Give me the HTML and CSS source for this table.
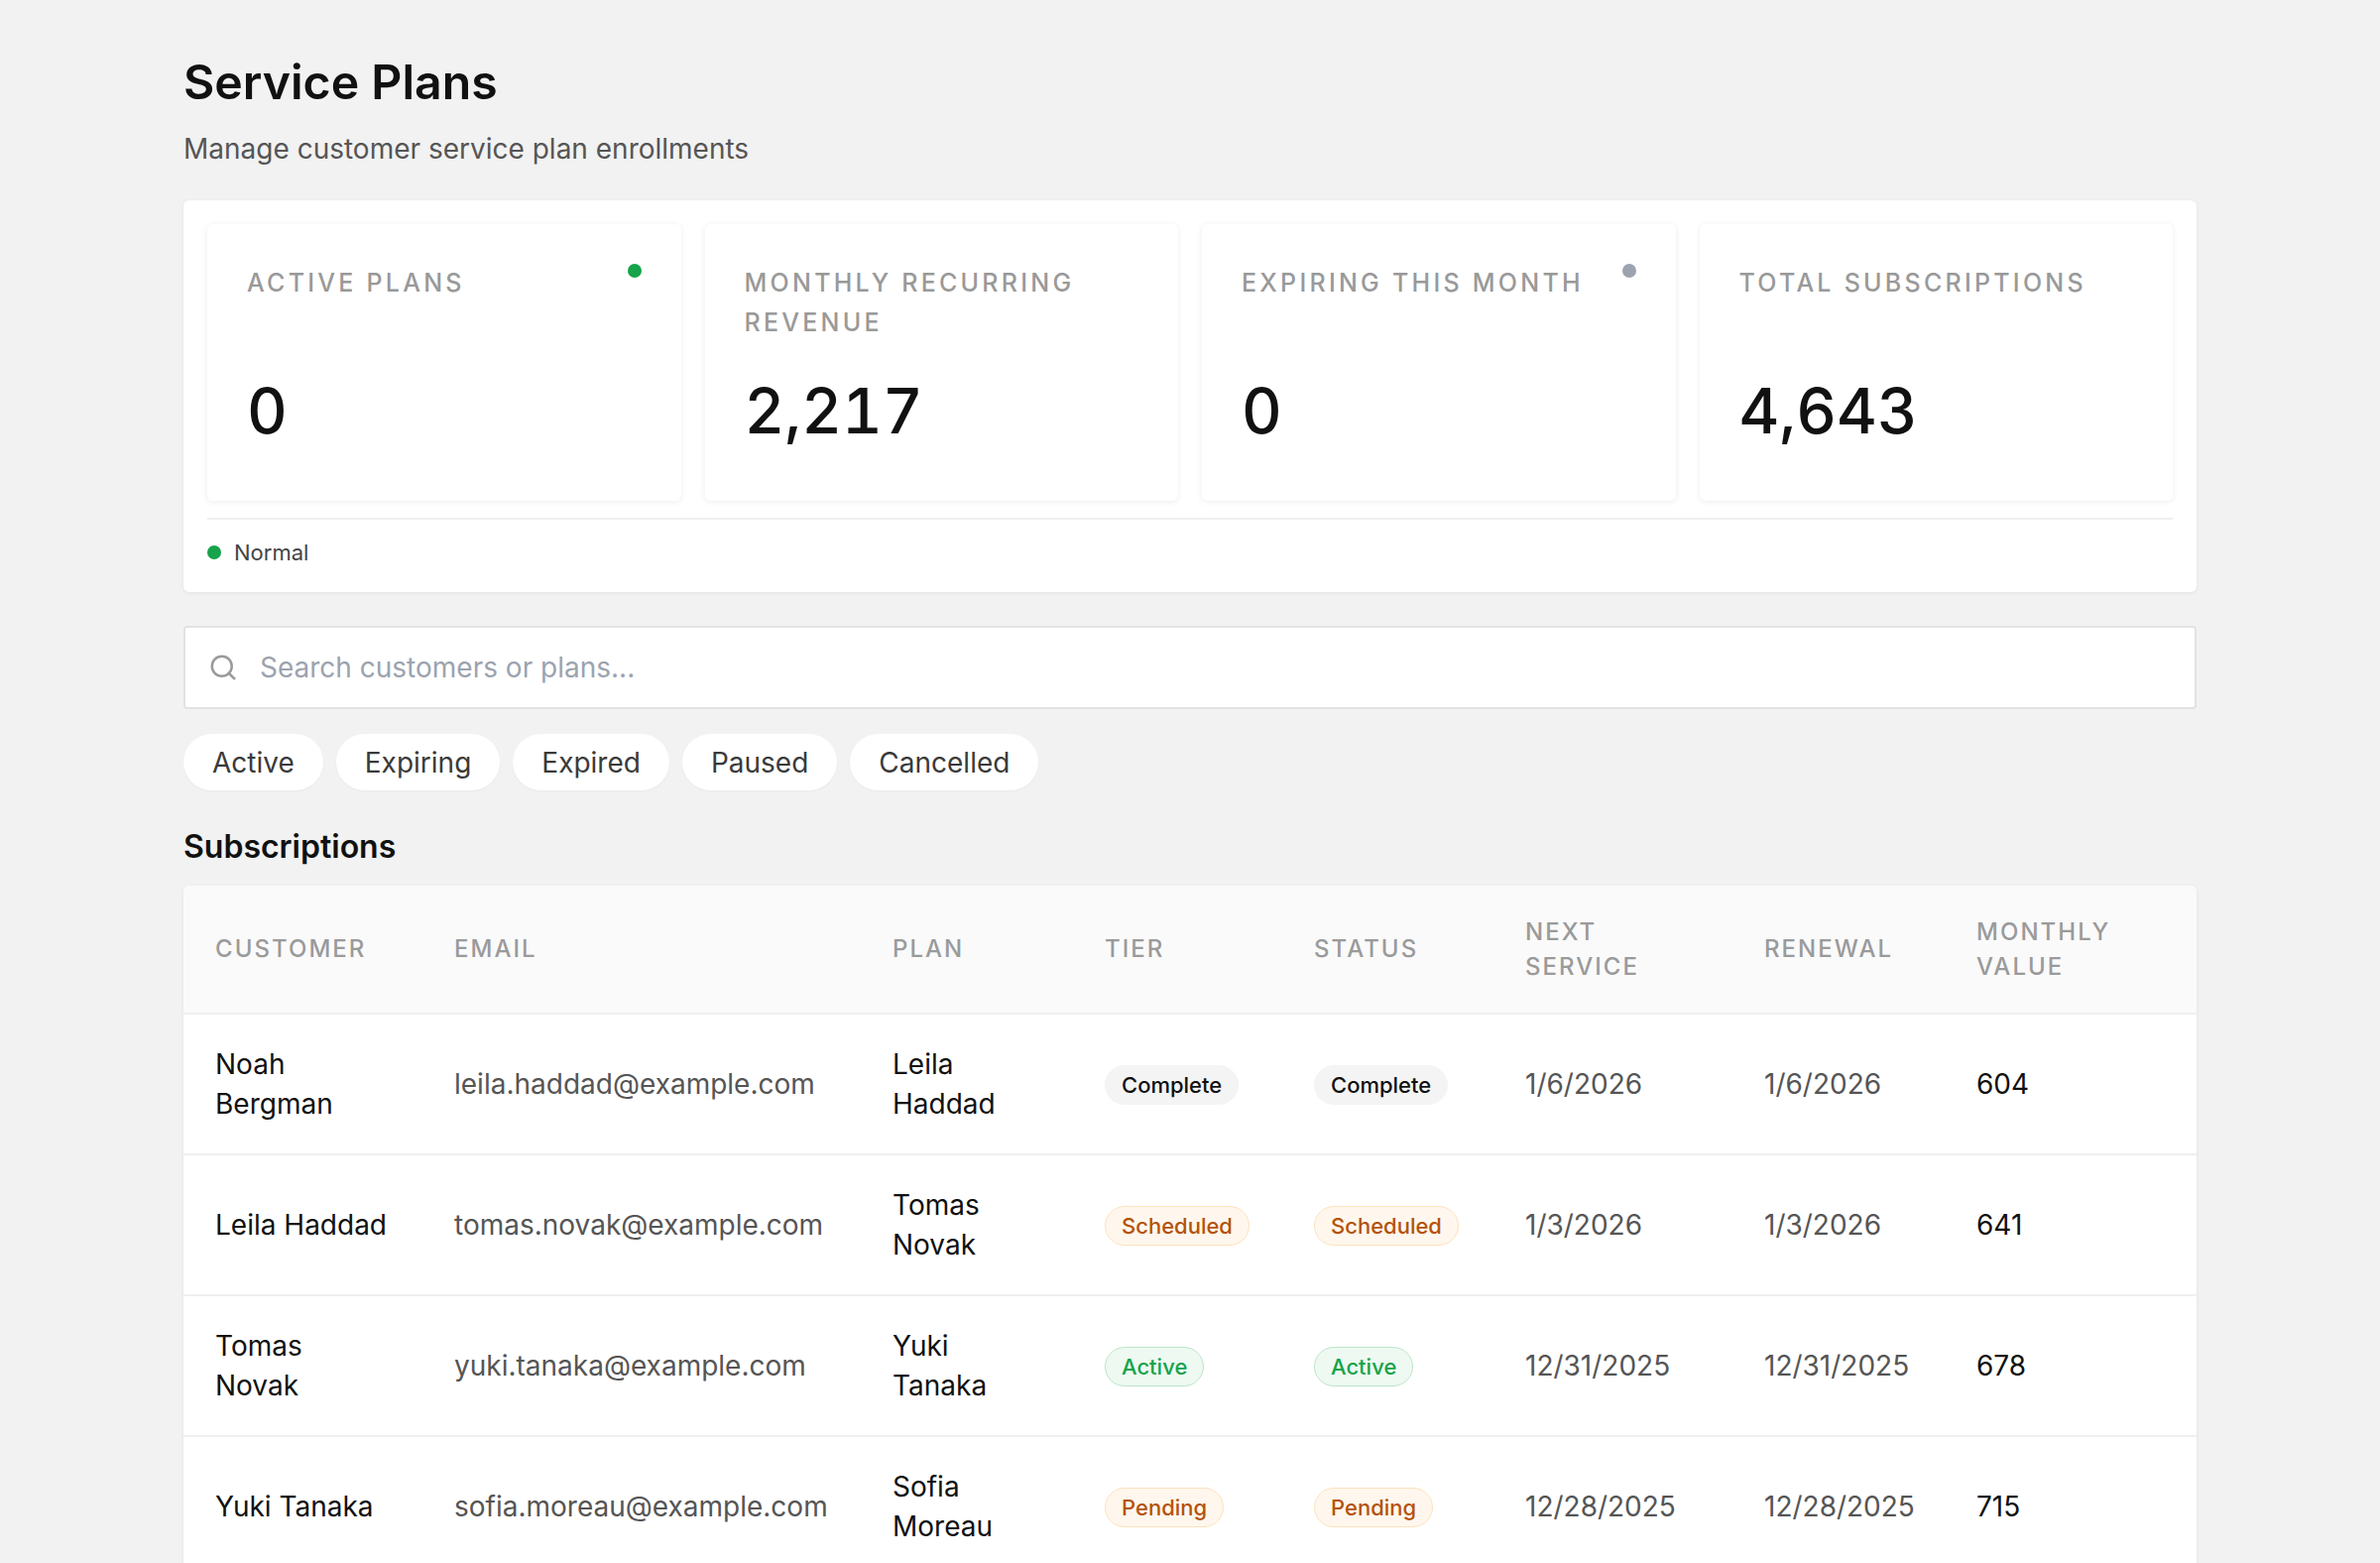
FILE: index.html
```html
<!DOCTYPE html>
<html lang="en">
<head>
<meta charset="utf-8">
<title>Service Plans</title>
<link rel="stylesheet" href="styles.css">
</head>
<body>
<main class="page">
  <h1 class="title">Service Plans</h1>
  <p class="subtitle">Manage customer service plan enrollments</p>

  <section class="stats-panel">
    <div class="stats-row">
      <div class="stat-card">
        <div class="stat-label">Active Plans</div>
        <div class="stat-value">0</div>
        <span class="stat-dot dot-green"></span>
      </div>
      <div class="stat-card">
        <div class="stat-label">Monthly Recurring Revenue</div>
        <div class="stat-value">2,217</div>
      </div>
      <div class="stat-card">
        <div class="stat-label">Expiring This Month</div>
        <div class="stat-value">0</div>
        <span class="stat-dot dot-gray"></span>
      </div>
      <div class="stat-card">
        <div class="stat-label">Total Subscriptions</div>
        <div class="stat-value">4,643</div>
      </div>
    </div>
    <div class="stats-footer">
      <span class="legend-dot"></span>
      <span class="legend-text">Normal</span>
    </div>
  </section>

  <div class="search">
    <svg class="search-icon" viewBox="0 0 24 24" fill="none" stroke="currentColor" stroke-width="2" stroke-linecap="round" stroke-linejoin="round"><circle cx="11" cy="11" r="8"></circle><line x1="21" y1="21" x2="16.65" y2="16.65"></line></svg>
    <input class="search-input" type="text" placeholder="Search customers or plans...">
  </div>

  <div class="filters">
    <button class="chip">Active</button>
    <button class="chip">Expiring</button>
    <button class="chip">Expired</button>
    <button class="chip">Paused</button>
    <button class="chip">Cancelled</button>
  </div>

  <h2 class="section-title">Subscriptions</h2>

  <div class="table-wrap">
    <table class="subs">
      <colgroup>
        <col class="c-customer">
        <col class="c-email">
        <col class="c-plan">
        <col class="c-tier">
        <col class="c-status">
        <col class="c-next">
        <col class="c-renewal">
        <col class="c-value">
      </colgroup>
      <thead>
        <tr>
          <th>Customer</th>
          <th>Email</th>
          <th>Plan</th>
          <th>Tier</th>
          <th>Status</th>
          <th>Next Service</th>
          <th>Renewal</th>
          <th>Monthly Value</th>
        </tr>
      </thead>
      <tbody>
        <tr>
          <td class="strong">Noah Bergman</td>
          <td class="muted">leila.haddad@example.com</td>
          <td class="strong">Leila Haddad</td>
          <td><span class="badge badge-complete">Complete</span></td>
          <td><span class="badge badge-complete">Complete</span></td>
          <td class="muted">1/6/2026</td>
          <td class="muted">1/6/2026</td>
          <td class="strong">604</td>
        </tr>
        <tr>
          <td class="strong">Leila Haddad</td>
          <td class="muted">tomas.novak@example.com</td>
          <td class="strong">Tomas Novak</td>
          <td><span class="badge badge-warn">Scheduled</span></td>
          <td><span class="badge badge-warn">Scheduled</span></td>
          <td class="muted">1/3/2026</td>
          <td class="muted">1/3/2026</td>
          <td class="strong">641</td>
        </tr>
        <tr>
          <td class="strong">Tomas Novak</td>
          <td class="muted">yuki.tanaka@example.com</td>
          <td class="strong">Yuki Tanaka</td>
          <td><span class="badge badge-active">Active</span></td>
          <td><span class="badge badge-active">Active</span></td>
          <td class="muted">12/31/2025</td>
          <td class="muted">12/31/2025</td>
          <td class="strong">678</td>
        </tr>
        <tr>
          <td class="strong">Yuki Tanaka</td>
          <td class="muted">sofia.moreau@example.com</td>
          <td class="strong">Sofia Moreau</td>
          <td><span class="badge badge-warn">Pending</span></td>
          <td><span class="badge badge-warn">Pending</span></td>
          <td class="muted">12/28/2025</td>
          <td class="muted">12/28/2025</td>
          <td class="strong">715</td>
        </tr>
        <tr>
          <td class="strong">Sofia Moreau</td>
          <td class="muted">noah.bergman@example.com</td>
          <td class="strong">Noah Bergman</td>
          <td><span class="badge badge-complete">Complete</span></td>
          <td><span class="badge badge-complete">Complete</span></td>
          <td class="muted">12/25/2025</td>
          <td class="muted">12/25/2025</td>
          <td class="strong">752</td>
        </tr>
      </tbody>
    </table>
  </div>
</main>
</body>
</html>
```

FILE: styles.css
```css
* { box-sizing: border-box; }

html, body { margin: 0; padding: 0; }

body {
  background: #f2f2f2;
  font-family: Inter, "Noto Sans", "Liberation Sans", sans-serif;
  color: #111;
}

.page {
  max-width: 2030px;
  margin: 0 auto;
  padding: 54px 0 80px;
}

.title {
  margin: 0;
  font-size: 48.2px;
  line-height: 58px;
  font-weight: 600;
  color: #111;
}

.subtitle {
  margin: 18px 0 32px;
  font-size: 28px;
  line-height: 40px;
  color: #555;
}

/* Stats panel */
.stats-panel {
  background: #fff;
  border-radius: 6px;
  box-shadow: 0 1px 4px rgba(0, 0, 0, 0.07);
  padding: 24px 24px 25px;
}

.stats-row {
  display: grid;
  grid-template-columns: repeat(4, 1fr);
  gap: 24px;
}

.stat-card {
  position: relative;
  height: 279px;
  padding: 39px 40px 0;
  background: #fff;
  border-radius: 6px;
  box-shadow: 0 1px 6px rgba(0, 0, 0, 0.08);
}

.stat-label {
  min-height: 80px;
  font-size: 25px;
  line-height: 40px;
  font-weight: 500;
  letter-spacing: 0.13em;
  text-transform: uppercase;
  color: #999;
}

.stat-value {
  margin-top: 31px;
  font-size: 63px;
  line-height: 77px;
  font-weight: 500;
  font-variant-numeric: tabular-nums;
  color: #111;
}

.stat-dot {
  position: absolute;
  top: 40px;
  right: 40px;
  width: 14px;
  height: 14px;
  border-radius: 50%;
}

.dot-green { background: #16a34a; }
.dot-gray { background: #9ca3af; }

.stats-footer {
  margin-top: 17px;
  border-top: 2px solid #efefef;
  padding-top: 18px;
  display: flex;
  align-items: center;
  gap: 13px;
}

.legend-dot {
  width: 14px;
  height: 14px;
  border-radius: 50%;
  background: #16a34a;
}

.legend-text {
  font-size: 22px;
  line-height: 30px;
  color: #444;
}

/* Search */
.search {
  margin-top: 34px;
  height: 84px;
  display: flex;
  align-items: center;
  gap: 22px;
  padding-left: 23px;
  background: #fff;
  border: 2px solid #e2e2e2;
  border-radius: 4px;
}

.search-icon {
  width: 30px;
  height: 30px;
  color: #9a9a9a;
  flex: none;
}

.search-input {
  flex: 1;
  border: 0;
  outline: 0;
  background: transparent;
  font: inherit;
  font-size: 28px;
  color: #111;
  padding: 0;
}

.search-input::placeholder { color: #9ca3af; }

/* Filters */
.filters {
  margin-top: 25px;
  display: flex;
  gap: 13px;
}

.chip {
  height: 57px;
  padding: 0 29px;
  border: 0;
  border-radius: 999px;
  background: #fff;
  box-shadow: 0 1px 2px rgba(0, 0, 0, 0.04);
  font: inherit;
  font-size: 28px;
  font-weight: 400;
  color: #3a3a3a;
}

/* Section title */
.section-title {
  margin: 39px 0 21px;
  font-size: 32px;
  line-height: 36px;
  font-weight: 600;
  color: #111;
}

/* Table */
.table-wrap {
  background: #fff;
  border-radius: 6px 6px 0 0;
  overflow: hidden;
  box-shadow: 0 1px 4px rgba(0, 0, 0, 0.07);
}

.subs {
  width: 100%;
  border-collapse: collapse;
  table-layout: fixed;
}

.c-customer { width: 241px; }
.c-email { width: 442px; }
.c-plan { width: 214px; }
.c-tier { width: 211px; }
.c-status { width: 213px; }
.c-next { width: 241px; }
.c-renewal { width: 214px; }
.c-value { width: 254px; }

.subs th {
  background: #fafafa;
  padding: 28.5px 32px;
  font-size: 24px;
  line-height: 35.5px;
  font-weight: 500;
  letter-spacing: 0.085em;
  text-transform: uppercase;
  text-align: left;
  color: #9a9a9a;
  vertical-align: middle;
}

.subs td {
  padding: 29.5px 32px;
  font-size: 28px;
  line-height: 40.5px;
  border-top: 2px solid #efefef;
  vertical-align: middle;
}

.subs td:first-child { padding-right: 34px; }

.subs td.strong { color: #111; }
.subs td.muted { color: #555; }

/* Badges */
.badge {
  display: inline-block;
  padding: 4px 16px;
  border-radius: 999px;
  border: 1.5px solid transparent;
  font-size: 22px;
  line-height: 30px;
  font-weight: 500;
  vertical-align: middle;
}

.badge-complete {
  background: #f4f4f4;
  border-color: #f4f4f4;
  color: #111;
}

.badge-warn {
  background: #fff7ed;
  border-color: #fde2bd;
  color: #b45309;
}

.badge-active {
  background: #edf9f1;
  border-color: #bde5c9;
  color: #16a34a;
}
```
